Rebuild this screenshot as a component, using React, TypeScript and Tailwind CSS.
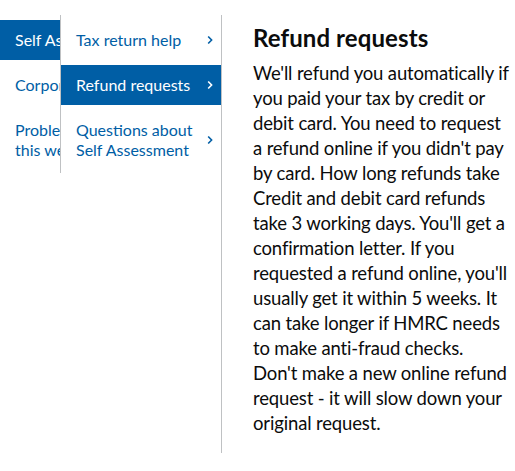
import React from "react";

const Chevron = ({ white }: { white?: boolean }) => (
  <svg width="6" height="10" viewBox="0 0 6 10" className="shrink-0">
    <path d="M1.2 1.5 L4.6 5 L1.2 8.5" fill="none" stroke={white ? "#ffffff" : "#005ea5"} strokeWidth="1.6" />
  </svg>
);

const lines = [
  "We'll refund you automatically if",
  "you paid your tax by credit or",
  "debit card. You need to request",
  "a refund online if you didn't pay",
  "by card. How long refunds take",
  "Credit and debit card refunds",
  "take 3 working days. You'll get a",
  "confirmation letter. If you",
  "requested a refund online, you'll",
  "usually get it within 5 weeks. It",
  "can take longer if HMRC needs",
  "to make anti-fraud checks.",
  "Don't make a new online refund",
  "request - it will slow down your",
  "original request.",
];

export default function App() {
  const font = { fontFamily: "Lato, 'Noto Sans', sans-serif" };
  return (
    <div className="flex w-[515px] h-[471px] bg-white overflow-hidden" style={font}>
      {/* first column */}
      <div className="w-[60px] shrink-0 overflow-hidden pt-[20px]">
        <div className="w-[200px] text-[16px] leading-[20px]">
          <div className="bg-[#005ea5] text-white pl-[15px] py-[10px] whitespace-nowrap">Self Assessment</div>
          <div className="text-[#005ea5] pl-[15px] py-[10px] mt-[5px] whitespace-nowrap">Corporation Tax</div>
          <div className="text-[#005ea5] pl-[15px] py-[10px] mt-[5px]">Problems using<br />this website</div>
        </div>
      </div>
      {/* second column */}
      <div className="w-[161px] shrink-0 self-start mt-[15px] border-l border-[#bfc1c3] h-[158px] pt-[5px] text-[16px] leading-[20px]">
        <div className="flex items-center justify-between pl-[15px] pr-[8px] py-[10px] text-[#005ea5]">
          <span>Tax return help</span>
          <Chevron />
        </div>
        <div className="flex items-center justify-between pl-[15px] pr-[8px] py-[10px] mt-[5px] bg-[#005ea5] text-white">
          <span>Refund requests</span>
          <Chevron white />
        </div>
        <div className="flex items-center justify-between pl-[15px] pr-[8px] py-[10px] mt-[5px] text-[#005ea5]">
          <span>Questions about<br />Self Assessment</span>
          <Chevron />
        </div>
      </div>
      {/* content */}
      <div className="flex-1 mt-[15px] h-[438px] border-l border-[#bfc1c3] pl-[31px] pr-0 text-[#0b0c0c]">
        <h1 className="text-[24px] leading-[30px] font-bold mt-[8px] tracking-[0.1px]">Refund requests</h1>
        <p className="text-[18.5px] leading-[25px] mt-[8px] tracking-[-0.15px]">
          {lines.map((l, i) => (
            <span key={i} className="block whitespace-nowrap">{l}</span>
          ))}
        </p>
      </div>
    </div>
  );
}
